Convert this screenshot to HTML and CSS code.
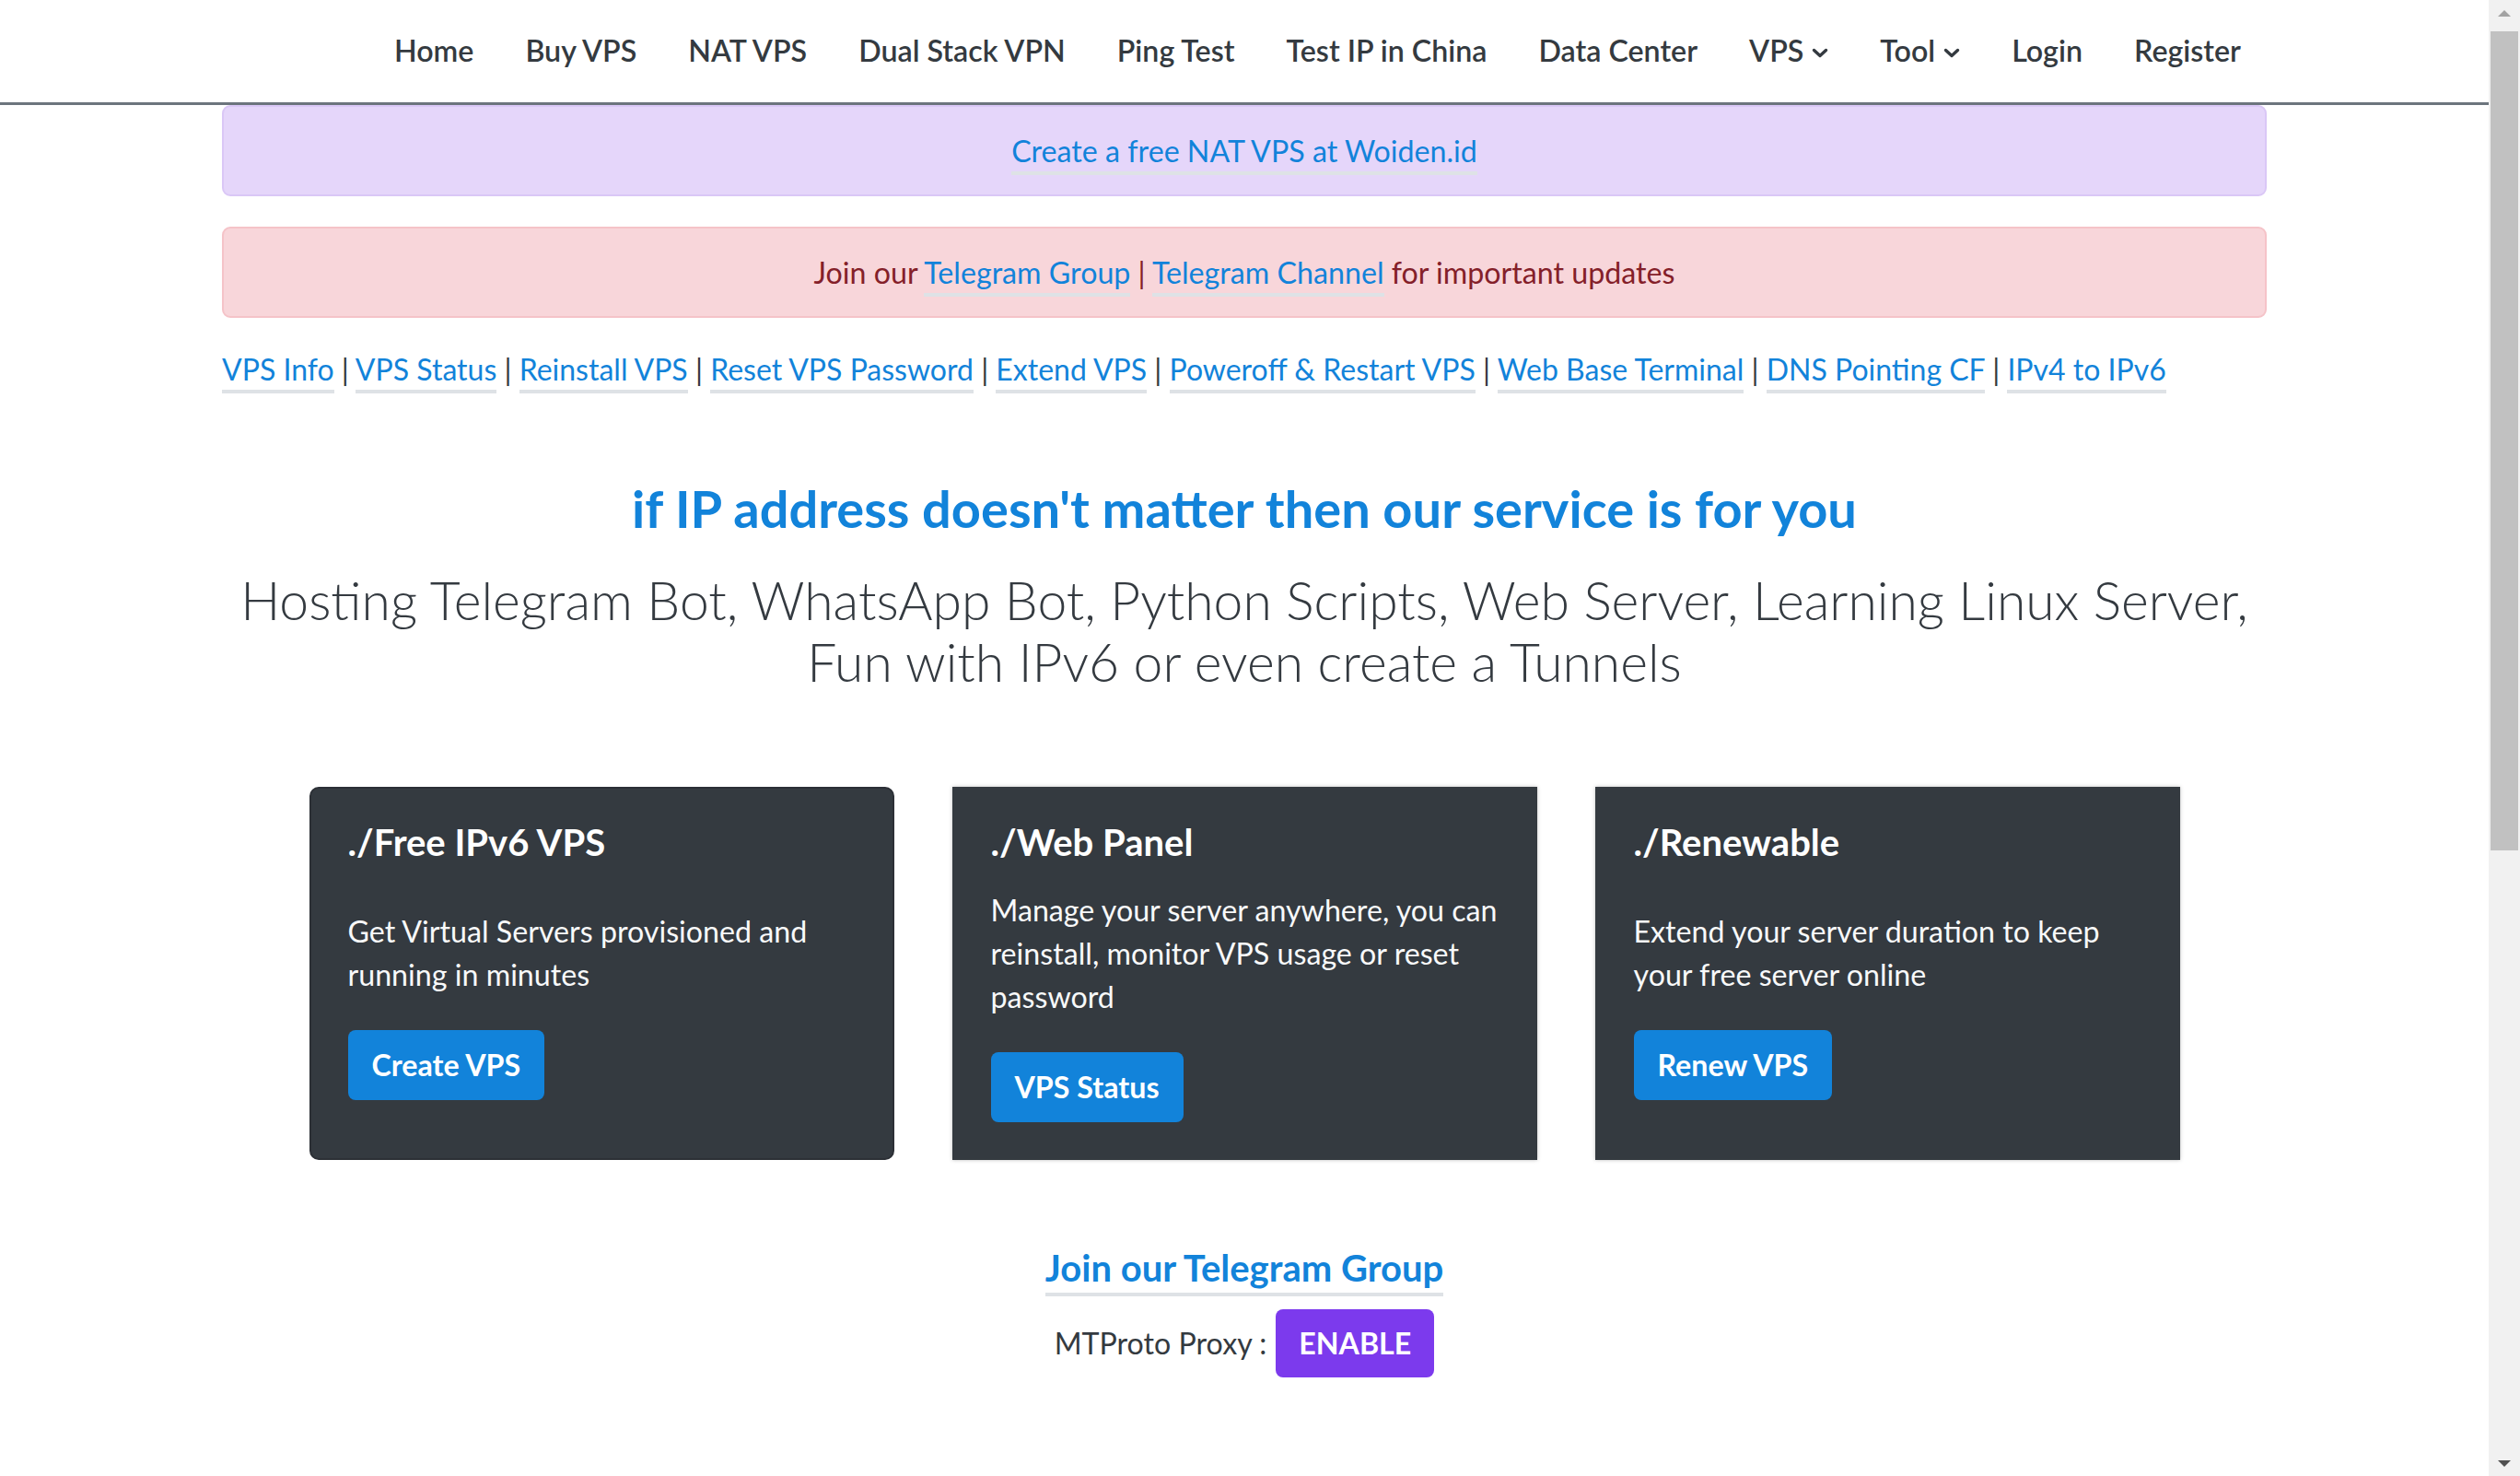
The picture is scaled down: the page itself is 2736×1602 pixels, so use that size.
FILE: index.html
```html
<!DOCTYPE html>
<html lang="en">
<head>
<meta charset="utf-8">
<title>Free IPv6 VPS</title>
<link rel="stylesheet" href="styles.css">
</head>
<body>
<header class="navbar">
  <div class="container nav-inner">
    <ul class="nav">
      <li><a class="nav-link" href="#">Home</a></li>
      <li><a class="nav-link" href="#">Buy VPS</a></li>
      <li><a class="nav-link" href="#">NAT VPS</a></li>
      <li><a class="nav-link" href="#">Dual Stack VPN</a></li>
      <li><a class="nav-link" href="#">Ping Test</a></li>
      <li><a class="nav-link" href="#">Test IP in China</a></li>
      <li><a class="nav-link" href="#">Data Center</a></li>
      <li><a class="nav-link dropdown" href="#">VPS <svg class="chev" viewBox="0 0 18 11" width="18" height="11"><polyline points="2.5,2.5 9,8.5 15.5,2.5" fill="none" stroke="currentColor" stroke-width="3.4" stroke-linecap="round" stroke-linejoin="round"/></svg></a></li>
      <li><a class="nav-link dropdown" href="#">Tool <svg class="chev" viewBox="0 0 18 11" width="18" height="11"><polyline points="2.5,2.5 9,8.5 15.5,2.5" fill="none" stroke="currentColor" stroke-width="3.4" stroke-linecap="round" stroke-linejoin="round"/></svg></a></li>
      <li><a class="nav-link" href="#">Login</a></li>
      <li><a class="nav-link" href="#">Register</a></li>
    </ul>
  </div>
</header>

<main class="container page">
  <div class="alert alert-purple">
    <a class="ul-link" href="#">Create a free NAT VPS at Woiden.id</a>
  </div>
  <div class="alert alert-pink">
    Join our <a class="ul-link" href="#">Telegram Group</a> | <a class="ul-link" href="#">Telegram Channel</a> for important updates
  </div>

  <p class="quick-links">
    <a class="ul-link" href="#">VPS Info</a> | <a class="ul-link" href="#">VPS Status</a> | <a class="ul-link" href="#">Reinstall VPS</a> | <a class="ul-link" href="#">Reset VPS Password</a> | <a class="ul-link" href="#">Extend VPS</a> | <a class="ul-link" href="#">Poweroff &amp; Restart VPS</a> | <a class="ul-link" href="#">Web Base Terminal</a> | <a class="ul-link" href="#">DNS Pointing CF</a> | <a class="ul-link" href="#">IPv4 to IPv6</a>
  </p>

  <h2 class="hero-title">if IP address doesn't matter then our service is for you</h2>
  <p class="hero-sub">Hosting Telegram Bot, WhatsApp Bot, Python Scripts, Web Server, Learning Linux Server,<br>Fun with IPv6 or even create a Tunnels</p>

  <section class="cards">
    <div class="card card-rounded">
      <h3 class="card-title">./Free IPv6 VPS</h3>
      <div class="card-body">
        <p class="card-text">Get Virtual Servers provisioned and running in minutes</p>
        <a class="btn btn-blue" href="#">Create VPS</a>
      </div>
    </div>
    <div class="card card-shadow">
      <h3 class="card-title">./Web Panel</h3>
      <div class="card-body">
        <p class="card-text">Manage your server anywhere, you can reinstall, monitor VPS usage or reset password</p>
        <a class="btn btn-blue" href="#">VPS Status</a>
      </div>
    </div>
    <div class="card card-shadow">
      <h3 class="card-title">./Renewable</h3>
      <div class="card-body">
        <p class="card-text">Extend your server duration to keep your free server online</p>
        <a class="btn btn-blue" href="#">Renew VPS</a>
      </div>
    </div>
  </section>

  <section class="join">
    <a class="ul-link join-link" href="#">Join our Telegram Group</a>
    <div class="proxy">
      <span class="proxy-label">MTProto Proxy :</span>
      <a class="btn btn-purple" href="#">ENABLE</a>
    </div>
  </section>
</main>

<div class="scrollbar" aria-hidden="true">
  <div class="sb-btn sb-up"><span class="tri tri-up"></span></div>
  <div class="sb-track"><div class="sb-thumb"></div></div>
  <div class="sb-btn sb-down"><span class="tri tri-down"></span></div>
</div>
</body>
</html>
```

FILE: styles.css
```css
body {
  margin: 0;
  padding-right: 34px;
  font-family: Lato, "Noto Sans", "Liberation Sans", sans-serif;
  font-size: 32.2px;
  line-height: 1.5;
  color: #343a40;
  background: #fff;
}

a {
  text-decoration: none;
}

.container {
  width: 2220px;
  margin: 0 auto;
}

/* fake classic scrollbar (overlay on the right edge) */
.scrollbar {
  position: fixed;
  top: 0;
  right: 0;
  width: 34px;
  height: 100vh;
  background: #f1f1f1;
  display: flex;
  flex-direction: column;
}
.sb-btn {
  height: 34px;
  display: flex;
  justify-content: center;
  align-items: center;
}
.sb-track {
  flex: 1;
  padding: 0 2px;
}
.sb-thumb {
  height: 889px;
  background: #c1c1c1;
}
.tri {
  width: 0;
  height: 0;
  border-left: 7px solid transparent;
  border-right: 7px solid transparent;
}
.tri-up {
  border-bottom: 7px solid #a3a3a3;
  margin-bottom: 6px;
}
.tri-down {
  border-top: 7px solid #505050;
  margin-top: 6px;
}

/* navbar */
.navbar {
  border-bottom: 3px solid #6c757d;
}
.nav-inner {
  display: flex;
  justify-content: flex-end;
  align-items: center;
  height: 111px;
}
.nav {
  display: flex;
  list-style: none;
  margin: 0;
  padding: 0;
}
.nav-link {
  display: flex;
  align-items: center;
  gap: 9px;
  padding: 0 28px;
  color: #343a40;
  font-weight: 600;
  font-size: 32.2px;
}
.chev {
  width: 18px;
  height: 11px;
  margin-top: 4px;
}

/* alerts */
.alert {
  text-align: center;
  padding: 24px;
  border: 2px solid;
  border-radius: 9px;
  line-height: 47px;
  margin-bottom: 33px;
}
.alert-purple {
  background: #e5d6fa;
  border-color: #dac7f6;
}
.alert-pink {
  background: #f8d6da;
  border-color: #f5c3c8;
  color: #842029;
  margin-bottom: 32px;
}

.ul-link {
  color: #1283da;
  border-bottom: 4px solid #dee2e6;
  padding-bottom: 3px;
}

.quick-links {
  margin: 0;
  font-size: 32px;
  line-height: 47px;
  color: #343a40;
}

/* hero */
.hero-title {
  margin: 94px 0 33px;
  text-align: center;
  color: #1283da;
  font-weight: 700;
  font-size: 56px;
  line-height: 1.2;
}
.hero-sub {
  margin: 0;
  text-align: center;
  font-weight: 300;
  font-size: 57px;
  line-height: 67px;
  color: #343a40;
}

/* cards */
.cards {
  display: flex;
  justify-content: center;
  gap: 63px;
  margin-top: 102px;
}
.card {
  width: 635px;
  height: 405px;
  box-sizing: border-box;
  background: #343a40;
  color: #fff;
  padding: 36px 42px 42px;
  display: flex;
  flex-direction: column;
}
.card-rounded {
  border-radius: 10px;
  border: 2px solid #2c3036;
  padding: 34px 40px 40px;
}
.card-shadow {
  box-shadow: 0 0 4px rgba(0, 0, 0, 0.25);
}
.card-title {
  margin: 0 0 26px;
  font-size: 40px;
  line-height: 1.2;
  font-weight: 700;
}
.card-body {
  flex: 1;
  display: flex;
  flex-direction: column;
  justify-content: center;
  align-items: flex-start;
}
.card-text {
  margin: 0 0 37px;
  line-height: 47px;
  color: #f8f9fa;
}

.btn {
  display: inline-block;
  font-weight: 700;
  color: #fff;
  border-radius: 8px;
  line-height: 46px;
  padding: 15px 26px;
}
.btn-blue {
  background: #1283da;
}
.btn-purple {
  background: #7c3aed;
  padding: 14px 25px;
}

/* join */
.join {
  margin-top: 93px;
  text-align: center;
}
.join-link {
  font-size: 40px;
  font-weight: 700;
  line-height: 1.2;
}
.proxy {
  display: flex;
  justify-content: center;
  align-items: center;
  gap: 10px;
  margin-top: 18px;
}
.proxy-label {
  color: #343a40;
}
```
